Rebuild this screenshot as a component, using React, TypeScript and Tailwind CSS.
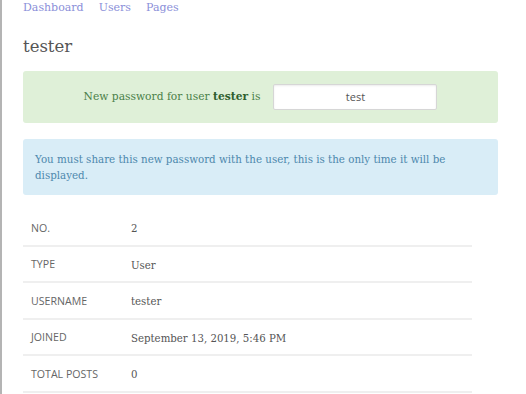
import React from "react";

const serif = { fontFamily: '"DejaVu Serif", "Liberation Serif", serif' };
const sans = { fontFamily: '"Open Sans", "Liberation Sans", sans-serif' };

const rows: [string, string][] = [
  ["NO.", "2"],
  ["TYPE", "User"],
  ["USERNAME", "tester"],
  ["JOINED", "September 13, 2019, 5:46 PM"],
  ["TOTAL POSTS", "0"],
];

export default function App() {
  return (
    <div className="w-[526px] h-[394px] overflow-hidden bg-white border-l-2 border-[#b4b4b4] flex flex-col" style={serif}>
      <div className="pl-[21px] pr-[28px] flex flex-col">
        <nav className="flex gap-[15px] text-[11px] leading-[15px] text-[#8b8fd9]">
          <a>Dashboard</a>
          <a>Users</a>
          <a>Pages</a>
        </nav>
        <h1 className="mt-[22px] text-[16.5px] leading-[20px] text-[#555]">tester</h1>
        <div className="mt-[14px] h-[52px] rounded-[3px] bg-[#dff0d8] flex items-center justify-center gap-[13px] text-[10.7px] text-[#4a8049]">
          <span>
            New password for user <b className="text-[#2f5f2f]">tester</b> is
          </span>
          <div
            className="w-[164px] h-[26px] bg-white border border-[#d6d6d6] rounded-[2px] shadow-[inset_0_1px_2px_rgba(0,0,0,0.08)] flex items-center justify-center text-[11px] text-[#555]"
            style={sans}
          >
            test
          </div>
        </div>
        <div className="mt-[16px] h-[56px] rounded-[3px] bg-[#d9edf7] px-[12px] pt-[13px] text-[10.3px] leading-[15.5px] text-[#4d88ad]">
          You must share this new password with the user, this is the only time it will be displayed.
        </div>
        <div className="mt-[15px] w-[449px] flex flex-col">
          {rows.map(([k, v]) => (
            <div key={k} className="h-[36.5px] pt-[3px] flex items-center border-b-2 border-[#efefef]">
              <div className="w-[108px] pl-[8px] text-[10.6px] text-[#666] uppercase" style={sans}>
                {k}
              </div>
              <div className="text-[10.2px] text-[#555]">{v}</div>
            </div>
          ))}
        </div>
      </div>
    </div>
  );
}
